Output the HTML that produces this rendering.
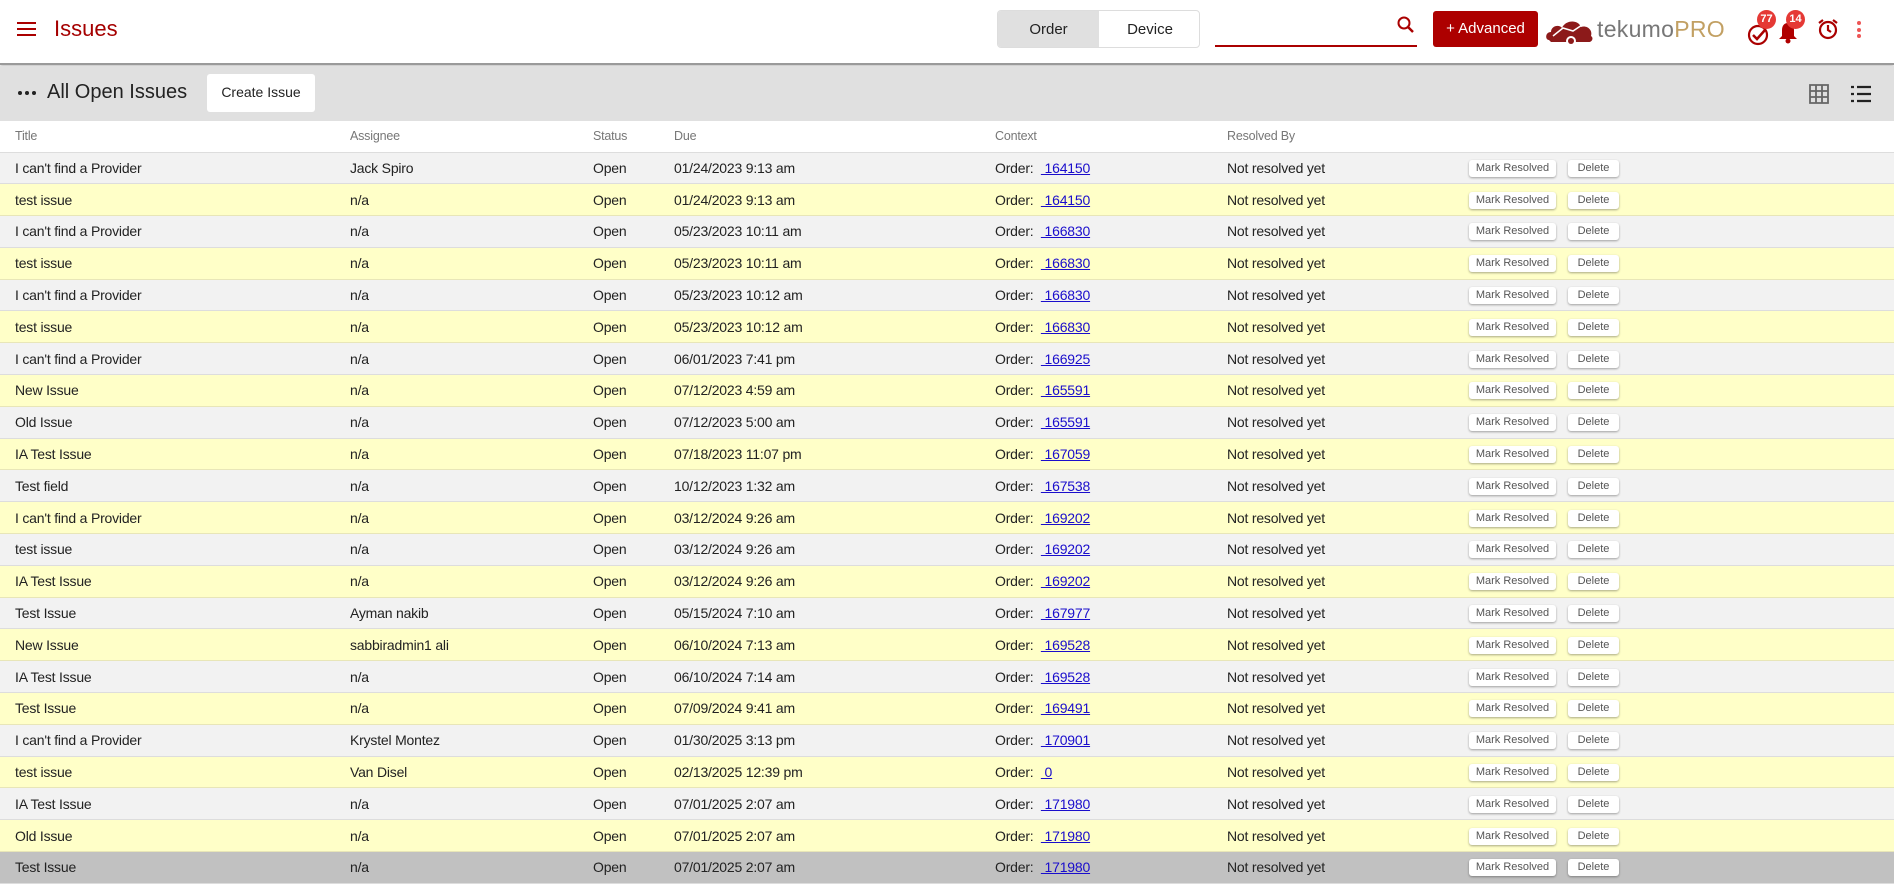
<!DOCTYPE html>
<html><head><meta charset="utf-8"><style>
*{box-sizing:border-box;margin:0;padding:0}
body{width:1894px;height:886px;overflow:hidden;background:#fff;font-family:"Liberation Sans",sans-serif;color:#222;position:relative}
.abs{position:absolute}
.hdr{left:0;top:0;width:1894px;height:65px;background:#fff;border-bottom:2px solid #9a9a9a;box-shadow:0 1px 3px rgba(0,0,0,.3)}
.tb{left:0;top:66px;width:1894px;height:55px;background:#e0e0e0}
table{position:absolute;left:0;top:121px;width:1894px;border-collapse:collapse;font-size:14px;letter-spacing:-0.2px}
th{height:31px;font-weight:normal;color:#777;font-size:12.5px;text-align:left;border-bottom:1px solid #ddd;background:#fff}
td{height:31.8px;border-bottom:1px solid #ddd;white-space:nowrap}
tr.g td{background:#f2f2f2}
tr.y td{background:#ffffc8;border-bottom-color:#e8e6b8}
tr.d td{background:#c1c1c1}
.b{display:inline-block;height:17px;line-height:16px;font-size:11px;color:#555;background:#fff;border-radius:3px;box-shadow:0 1px 2px rgba(0,0,0,.35);text-align:center;vertical-align:middle;letter-spacing:0}
a{color:#1a0dcc;text-decoration:underline}
</style></head><body>
<div class="abs hdr"></div>
<div class="abs" style="left:17px;top:22px;width:19px;height:14px;border-top:2.5px solid #a00;border-bottom:2.5px solid #a00"><div style="margin-top:3.5px;height:2.5px;background:#a00"></div></div>
<div class="abs" style="left:54px;top:16px;font-size:22px;color:#a50000">Issues</div>
<div class="abs" style="left:997px;top:10px;width:203px;height:38px;border:1px solid #ddd;border-radius:4px;overflow:hidden;font-size:15px">
<div style="position:absolute;left:0;top:0;width:101px;height:38px;background:#e0e0e0;text-align:center;line-height:37px">Order</div>
<div style="position:absolute;left:101px;top:0;width:102px;height:38px;text-align:center;line-height:37px">Device</div></div>
<div class="abs" style="left:1215px;top:45px;width:202px;height:1.5px;background:#a00"></div>
<svg class="abs" style="left:1396px;top:15px" width="20" height="20" viewBox="0 0 20 20"><circle cx="8" cy="8" r="5.5" fill="none" stroke="#a00" stroke-width="2"/><path d="M12 12l5 5" stroke="#a00" stroke-width="2.5"/></svg>
<div class="abs" style="left:1433px;top:11px;width:105px;height:36px;background:#ad0000;border-radius:3px;color:#fff;font-size:15px;text-align:center;line-height:36px">+ Advanced</div>
<svg class="abs" style="left:1545px;top:14px" width="50" height="32" viewBox="0 0 50 32"><path d="M4 26c-4 0-4-8 2-8 0-6 8-8 11-4 3-8 16-9 19-1 6-2 12 3 10 9 3 2 1 6-2 6H6z" fill="#8c1a1a"/><circle cx="26" cy="27" r="5" fill="#fff"/><circle cx="26" cy="27" r="3" fill="#8c1a1a"/><path d="M8 22l10-8 10 3 12-8" stroke="#fff" stroke-width="1.5" fill="none"/></svg>
<div class="abs" style="left:1597px;top:16px;font-size:23px;color:#777;letter-spacing:0.3px">tekumo<span style="color:#c2a063">PRO</span></div>
<svg class="abs" style="left:1747px;top:20px" width="24" height="26" viewBox="0 0 24 26"><circle cx="11" cy="15" r="9" fill="none" stroke="#a00" stroke-width="2.2"/><path d="M6 15l4 4 8-9" stroke="#a00" stroke-width="2.5" fill="none"/></svg>
<div class="abs" style="left:1757px;top:10px;width:19px;height:19px;border-radius:50%;background:#e53935;color:#fff;font-size:11px;text-align:center;line-height:19px;font-weight:bold">77</div>
<svg class="abs" style="left:1777px;top:20px" width="22" height="24" viewBox="0 0 22 24"><path d="M11 3c-4 0-6 3-6 7v6l-3 3h18l-3-3v-6c0-4-2-7-6-7z" fill="#b00000"/><circle cx="11" cy="21" r="2.5" fill="#b00000"/></svg>
<div class="abs" style="left:1786px;top:10px;width:19px;height:19px;border-radius:50%;background:#e53935;color:#fff;font-size:11px;text-align:center;line-height:19px;font-weight:bold">14</div>
<svg class="abs" style="left:1817px;top:17px" width="22" height="24" viewBox="0 0 22 24"><circle cx="11" cy="13" r="8" fill="none" stroke="#a00" stroke-width="2.2"/><path d="M11 8v5l3 2M2 6l4-3M20 6l-4-3" stroke="#a00" stroke-width="2.2" fill="none"/></svg>
<div class="abs" style="left:1857px;top:21px;width:5px"><div style="width:4px;height:4px;border-radius:50%;background:#e55;margin-bottom:2.5px"></div><div style="width:4px;height:4px;border-radius:50%;background:#e55;margin-bottom:2.5px"></div><div style="width:4px;height:4px;border-radius:50%;background:#e55"></div></div>
<div class="abs tb"></div>
<div class="abs" style="left:18px;top:91px;width:18px;height:4px;display:flex;justify-content:space-between"><i style="width:4px;height:4px;border-radius:50%;background:#222"></i><i style="width:4px;height:4px;border-radius:50%;background:#222"></i><i style="width:4px;height:4px;border-radius:50%;background:#222"></i></div>
<div class="abs" style="left:47px;top:81px;font-size:20px;color:#222">All Open Issues</div>
<div class="abs" style="left:207px;top:74px;width:108px;height:38px;background:#fff;border-radius:3px;font-size:14px;text-align:center;line-height:36px">Create Issue</div>
<svg class="abs" style="left:1809px;top:84px" width="20" height="20" viewBox="0 0 20 20"><path d="M1 1h18v18H1zM7 1v18M13 1v18M1 7h18M1 13h18" fill="none" stroke="#666" stroke-width="1.8"/></svg>
<svg class="abs" style="left:1851px;top:85px" width="20" height="18" viewBox="0 0 20 18"><path d="M0 2h3M6 2h14M0 9h3M6 9h14M0 16h3M6 16h14" stroke="#222" stroke-width="2.2"/></svg>
<table>
<colgroup><col style="width:350px"><col style="width:243px"><col style="width:81px"><col style="width:321px"><col style="width:232px"><col style="width:242px"><col style="width:99px"><col></colgroup>
<tr><th style="padding-left:15px">Title</th><th>Assignee</th><th>Status</th><th>Due</th><th>Context</th><th>Resolved By</th><th></th><th></th></tr>
<tbody id="tb"></tbody></table>
<script>
var d=[["I can't find a Provider","Jack Spiro","01/24/2023 9:13 am","164150"],["test issue","n/a","01/24/2023 9:13 am","164150"],["I can't find a Provider","n/a","05/23/2023 10:11 am","166830"],["test issue","n/a","05/23/2023 10:11 am","166830"],["I can't find a Provider","n/a","05/23/2023 10:12 am","166830"],["test issue","n/a","05/23/2023 10:12 am","166830"],["I can't find a Provider","n/a","06/01/2023 7:41 pm","166925"],["New Issue","n/a","07/12/2023 4:59 am","165591"],["Old Issue","n/a","07/12/2023 5:00 am","165591"],["IA Test Issue","n/a","07/18/2023 11:07 pm","167059"],["Test field","n/a","10/12/2023 1:32 am","167538"],["I can't find a Provider","n/a","03/12/2024 9:26 am","169202"],["test issue","n/a","03/12/2024 9:26 am","169202"],["IA Test Issue","n/a","03/12/2024 9:26 am","169202"],["Test Issue","Ayman nakib","05/15/2024 7:10 am","167977"],["New Issue","sabbiradmin1 ali","06/10/2024 7:13 am","169528"],["IA Test Issue","n/a","06/10/2024 7:14 am","169528"],["Test Issue","n/a","07/09/2024 9:41 am","169491"],["I can't find a Provider","Krystel Montez","01/30/2025 3:13 pm","170901"],["test issue","Van Disel","02/13/2025 12:39 pm","0"],["IA Test Issue","n/a","07/01/2025 2:07 am","171980"],["Old Issue","n/a","07/01/2025 2:07 am","171980"],["Test Issue","n/a","07/01/2025 2:07 am","171980"]];
var h="";d.forEach(function(r,i){var c=i==22?"d":(i%2?"y":"g");h+='<tr class="'+c+'"><td style="padding-left:15px">'+r[0]+'</td><td>'+r[1]+'</td><td>Open</td><td>'+r[2]+'</td><td>Order:&nbsp;&nbsp;<a>&nbsp;'+r[3]+'</a></td><td>Not resolved yet</td><td><span class="b" style="width:87px">Mark Resolved</span></td><td><span class="b" style="width:51px">Delete</span></td></tr>'});document.getElementById("tb").innerHTML=h;
</script>
</body></html>
